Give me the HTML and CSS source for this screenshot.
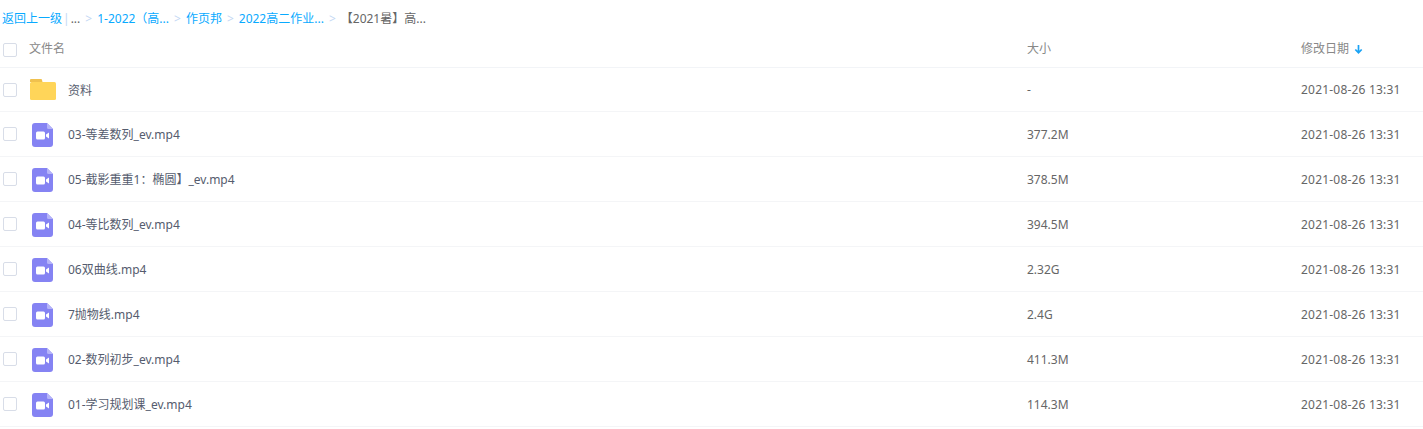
FILE: index.html
```html
<!DOCTYPE html>
<html lang="zh-CN">
<head>
    <meta charset="UTF-8">
    <title>文件列表</title>
    <link rel="stylesheet" href="styles.css">
</head>
<body>
    <svg class="defs" width="0" height="0">
        <symbol id="video" viewBox="0 0 21 24">
            <path d="M3 0H15L21 6V21a3 3 0 0 1-3 3H3a3 3 0 0 1-3-3V3a3 3 0 0 1 3-3Z" fill="#8583f3"/>
            <path d="M15 0L21 6H16.5A1.5 1.5 0 0 1 15 4.5Z" fill="#b5b4f8"/>
            <rect x="4" y="8.5" width="9" height="8" rx="1.5" fill="#fff"/>
            <path d="M14 11.5L17 9.5V15.5L14 13.5Z" fill="#fff"/>
        </symbol>
    </svg>

    <div class="crumbs">
        <a>返回上一级</a><span class="bar">|</span><span class="dots">...</span>
        <span class="sep">&gt;</span><a>1-2022（高...</a>
        <span class="sep">&gt;</span><a>作页邦</a>
        <span class="sep">&gt;</span><a>2022高二作业...</a>
        <span class="sep">&gt;</span><span class="current">【2021暑】高...</span>
    </div>

    <div class="row head">
        <span class="check"></span>
        <span class="name">文件名</span>
        <span>大小</span>
        <span class="date-head">修改日期
            <svg class="arrow" width="9" height="10" viewBox="0 0 9 10"><path d="M4.5 1V8.5M1.3 5.5L4.5 8.7L7.7 5.5" fill="none" stroke="#1aa3f5" stroke-width="1.7"/></svg>
        </span>
    </div>

    <div class="row first">
        <span class="check"></span>
        <div class="name">
            <svg class="folder" width="26" height="21" viewBox="0 0 26 21">
                <path d="M1 0H11a1 1 0 0 1 1 1L12.500 3H0V1a1 1 0 0 1 1-1Z" fill="#f0c14f"/>
                <rect y="3" width="26" height="18" rx="1.500" fill="#ffd559"/>
            </svg>
            <span>资料</span>
        </div>
        <span>-</span>
        <span class="date">2021-08-26 13:31</span>
    </div>

    <div class="row">
        <span class="check"></span>
        <div class="name"><svg class="video"><use href="#video"/></svg><span>03-等差数列_ev.mp4</span></div>
        <span>377.2M</span>
        <span class="date">2021-08-26 13:31</span>
    </div>
    <div class="row">
        <span class="check"></span>
        <div class="name"><svg class="video"><use href="#video"/></svg><span>05-截影重重1：椭圆】_ev.mp4</span></div>
        <span>378.5M</span>
        <span class="date">2021-08-26 13:31</span>
    </div>
    <div class="row">
        <span class="check"></span>
        <div class="name"><svg class="video"><use href="#video"/></svg><span>04-等比数列_ev.mp4</span></div>
        <span>394.5M</span>
        <span class="date">2021-08-26 13:31</span>
    </div>
    <div class="row">
        <span class="check"></span>
        <div class="name"><svg class="video"><use href="#video"/></svg><span>06双曲线.mp4</span></div>
        <span>2.32G</span>
        <span class="date">2021-08-26 13:31</span>
    </div>
    <div class="row">
        <span class="check"></span>
        <div class="name"><svg class="video"><use href="#video"/></svg><span>7抛物线.mp4</span></div>
        <span>2.4G</span>
        <span class="date">2021-08-26 13:31</span>
    </div>
    <div class="row">
        <span class="check"></span>
        <div class="name"><svg class="video"><use href="#video"/></svg><span>02-数列初步_ev.mp4</span></div>
        <span>411.3M</span>
        <span class="date">2021-08-26 13:31</span>
    </div>
    <div class="row">
        <span class="check"></span>
        <div class="name"><svg class="video"><use href="#video"/></svg><span>01-学习规划课_ev.mp4</span></div>
        <span>114.3M</span>
        <span class="date">2021-08-26 13:31</span>
    </div>
</body>
</html>
```

FILE: styles.css
```css
body {
    margin: 0;
    background-color: #fff;
    font-family: "Noto Sans", "Noto Sans CJK SC", sans-serif;
    font-size: 12px;
    color: #666;
    overflow: hidden;
}
.defs {
    display: block;
}
.crumbs {
    height: 30px;
    padding: 3px 0 0 2px;
    display: flex;
    align-items: center;
    white-space: nowrap;
}
.crumbs a {
    color: #09aaff;
}
.bar {
    color: #c4d8f4;
    margin: 0 1px;
}
.dots {
    color: #666;
}
.sep {
    color: #c4d8f4;
    margin: 0 5px;
}
.current {
    margin-left: 0;
}
.row {
    display: grid;
    grid-template-columns: 29px 995px 274px 1fr;
    align-items: center;
    height: 44px;
    padding-left: 3px;
    border-bottom: 1px solid #f4f5f7;
}
.row.head {
    height: 30px;
    padding-bottom: 4px;
    color: #888;
    border-bottom-color: #f2f4f7;
}
.row.first {
    height: 43px;
}
.check {
    width: 12px;
    height: 12px;
    border: 1px solid #d8dde8;
    border-radius: 2px;
}
.head .check {
    margin-top: 3px;
}
.name {
    display: flex;
    align-items: center;
    margin-left: -3px;
    color: #555c6e;
}
.head .name {
    color: #888;
}
.date {
    letter-spacing: 0.2px;
}
.date-head {
    display: flex;
    align-items: center;
    gap: 5px;
}
.arrow {
    margin-top: 2px;
}
.folder {
    margin-left: 1px;
    margin-right: 12px;
}
.video {
    width: 21px;
    height: 24px;
    margin: 1px 15px 0 3px;
}
```
